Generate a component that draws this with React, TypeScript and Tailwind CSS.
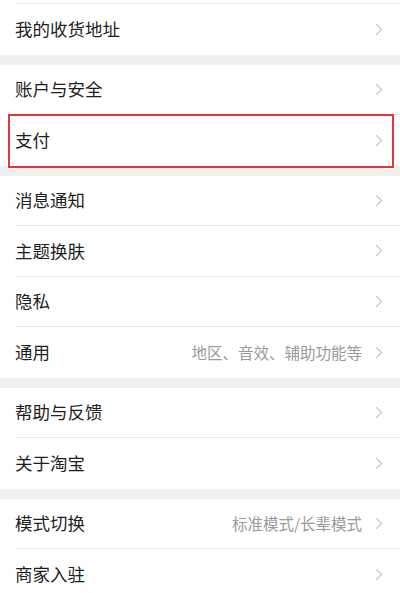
type Item = { label: string; desc?: string };

const groups: Item[][] = [
  [{ label: "我的收货地址" }],
  [{ label: "账户与安全" }, { label: "支付" }],
  [
    { label: "消息通知" },
    { label: "主题换肤" },
    { label: "隐私" },
    { label: "通用", desc: "地区、音效、辅助功能等" },
  ],
  [{ label: "帮助与反馈" }, { label: "关于淘宝" }],
  [{ label: "模式切换", desc: "标准模式/长辈模式" }, { label: "商家入驻" }],
];

function Chevron() {
  return (
    <svg width="8" height="13" viewBox="0 0 8 13" className="shrink-0">
      <path d="M1.2 1.2L6.6 6.5L1.2 11.8" fill="none" stroke="#c6c6c6" strokeWidth="1.2" />
    </svg>
  );
}

function Row({ item, last }: { item: Item; last: boolean }) {
  return (
    <div className="h-[50.5px] pl-[15px] bg-white">
      <div
        className={
          "flex h-full items-center pr-[17px] " +
          (last ? "" : "border-b border-[#e8e8e8]")
        }
      >
        <span className="flex-1 text-[17.5px] text-[#1e1e1e]">{item.label}</span>
        {item.desc && (
          <span className="mr-[13px] text-[15.5px] text-[#9a9a9a]">{item.desc}</span>
        )}
        <Chevron />
      </div>
    </div>
  );
}

export default function App() {
  return (
    <div
      className="relative h-[593px] overflow-hidden bg-[#f0f0f0]"
      style={{ fontFamily: '"Noto Sans CJK SC", "Noto Sans", sans-serif' }}
    >
      {/* tail of the row above */}
      <div className="h-[4px] bg-white pl-[15px]">
        <div className="h-full border-b border-[#e8e8e8]" />
      </div>
      {groups.map((g, gi) => (
        <div key={gi} className={gi === 0 ? "" : "mt-[10px]"}>
          {g.map((item, i) => (
            <Row key={item.label} item={item} last={i === g.length - 1} />
          ))}
        </div>
      ))}

      {/* highlight */}
      <div className="absolute left-[8px] top-[114px] h-[54px] w-[386px] border-2 border-[#e0383a]" />
    </div>
  );
}
